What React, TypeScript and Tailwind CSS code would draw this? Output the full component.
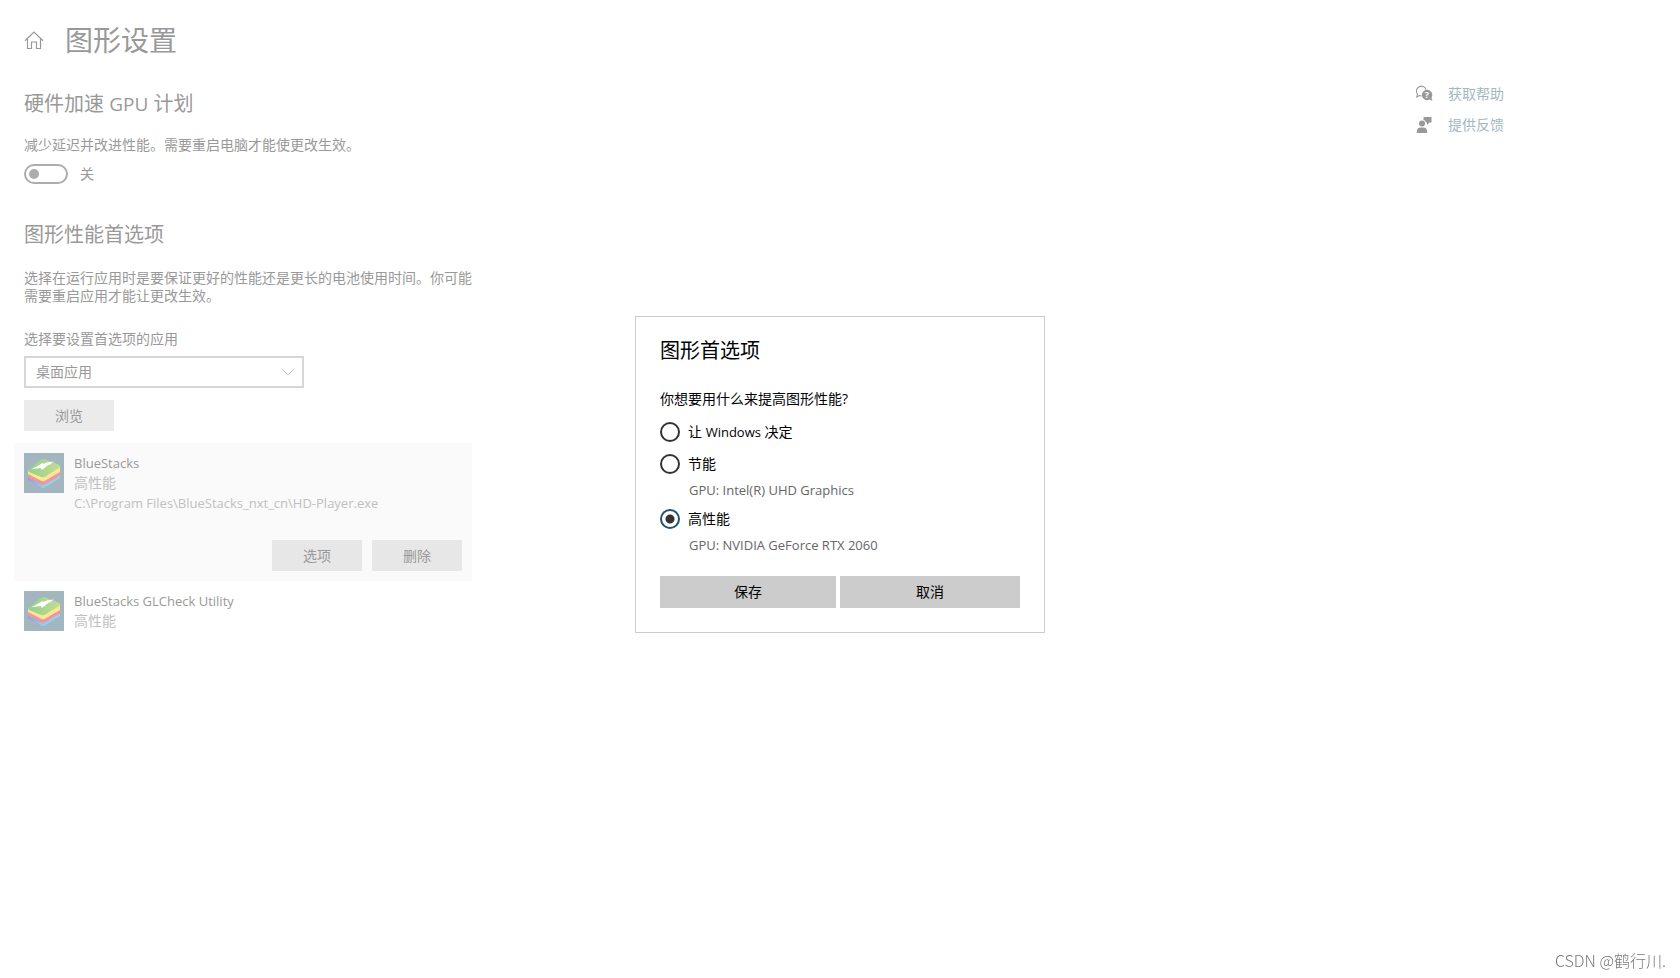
import { useState } from "react"

const PREFERENCES = [
    { id: 'auto', label: <>让 <span className="text-[13px]">Windows</span> 决定</>, gpu: null },
    { id: 'saving', label: '节能', gpu: 'GPU: Intel(R) UHD Graphics' },
    { id: 'high', label: '高性能', gpu: 'GPU: NVIDIA GeForce RTX 2060' }
];

function HomeIcon() {
    return (
        <svg width="20" height="20" viewBox="0 0 20 20" fill="none" stroke="#999999" strokeWidth="1.2">
            <path d="M1 10.700 10 2.100l9 8.600" />
            <path d="M3.500 8.700v9.800h4V12h5v6.500h4V8.700" />
        </svg>
    )
}

function HelpIcon() {
    return (
        <svg width="18" height="18" viewBox="0 0 18 18" aria-hidden="true">
            <path
                d="M5.500 10.800Q4.500 10.900 3.600 10.600L.8 12l.7-2.900A4.900 4.900 0 1 1 10 4.600"
                fill="none"
                stroke="#999999"
                strokeWidth="1.1"
            />
            <path d="M11 4.800a5.200 5.200 0 1 0 2.500 9.800l3 1.400-1-3.100A5.200 5.200 0 0 0 11 4.800Z" fill="#999999" />
            <text x="11" y="13.200" textAnchor="middle" fontSize="9" fontWeight="700" fill="#ffffff">?</text>
        </svg>
    )
}

function FeedbackIcon() {
    return (
        <svg width="18" height="18" viewBox="0 0 18 18" fill="#999999" aria-hidden="true">
            <circle cx="6" cy="7.500" r="3" />
            <path d="M.8 17v-1.200q0-4.300 4-4.300h2.400q4 0 4 4.300V17Z" />
            <path d="M7.500 1H15.500v5.500h-2L11 9V6.500h-1A4.500 4.500 0 0 0 7.500 3.800Z" />
        </svg>
    )
}

function BlueStacksLogo() {
    return (
        <svg width="40" height="40" viewBox="0 0 40 40" className="shrink-0" aria-hidden="true">
            <defs>
                <linearGradient id="bs-top" x1="0" x2="1">
                    <stop offset="0" stopColor="#93d08c" />
                    <stop offset="1" stopColor="#c3dc93" />
                </linearGradient>
                <linearGradient id="bs-base" x1="0" x2="1">
                    <stop offset="0" stopColor="#8fa6d6" />
                    <stop offset="0.5" stopColor="#97cdea" />
                    <stop offset="1" stopColor="#8fd3f0" />
                </linearGradient>
            </defs>
            <rect width="40" height="40" fill="#a3b5bf" />
            <path d="M4 24 19 18l17 4v3L21 34.500q-2 1-4 0L4 27.500Z" fill="url(#bs-base)" />
            <path d="M4 21 19 15l17 3v4.500L21 31.300q-2 1-4 0L4 24.500Z" fill="#f493a0" />
            <path d="M4 17 19 12l17 1v6L21 27.800q-2 1-4 0L4 21Z" fill="#fbe892" />
            <path d="M4.300 16.500 17 6.800q2-1.200 4-.6l13.500 5.300q2 1 1.200 3L21.500 23.500q-2.500 1.300-5 .3L5 19q-1.500-.9-.7-2.500Z" fill="url(#bs-top)" />
            <path d="M7.500 16.300 19.300 9.700l-.3 1.300q5-2.800 11.500-2.200-2.700.5-4 1.700l1.800.6q-3.600.2-5.600 1.800-2 2.600-5 4.100l-.8-2Z" fill="#ffffff" />
        </svg>
    )
}

function SettingsPage() {
    return (
        <div className="flex items-start justify-between">
            <main className="w-[472px] pl-6 pt-[22px] text-[#999999]">
                <header className="flex items-center gap-[21px]">
                    <a href="#home" aria-label="主页"><HomeIcon /></a>
                    <h1 className="text-[28px] leading-9">图形设置</h1>
                </header>

                <h2 className="mt-8 text-xl leading-7">硬件加速 <span className="text-[19px]">GPU</span> 计划</h2>
                <p className="mt-[18px]">减少延迟并改进性能。需要重启电脑才能使更改生效。</p>
                <label className="mt-[10px] flex items-center gap-3">
                    <span className="relative flex h-5 w-11">
                        <input
                            type="checkbox"
                            role="switch"
                            className="peer h-5 w-11 appearance-none rounded-full border-2 border-[#adadad]"
                        />
                        <span className="pointer-events-none absolute left-[5px] top-[5px] size-[10px] rounded-full bg-[#adadad] peer-checked:left-[29px]" />
                    </span>
                    <span>关</span>
                </label>

                <h2 className="mt-[37px] text-xl leading-7">图形性能首选项</h2>
                <p className="mt-5">选择在运行应用时是要保证更好的性能还是更长的电池使用时间。你可能需要重启应用才能让更改生效。</p>

                <label htmlFor="app-type" className="mt-[25px] block">选择要设置首选项的应用</label>
                <div className="relative mt-2 w-[280px]">
                    <select id="app-type" className="h-8 w-full appearance-none border-2 border-[#d6d6d6] bg-white px-[10px]">
                        <option>桌面应用</option>
                    </select>
                    <svg className="pointer-events-none absolute right-[10px] top-3" width="12" height="8" viewBox="0 0 12 8" fill="none" stroke="#c2c2c2">
                        <path d="m0 1 6 6 6-6" />
                    </svg>
                </div>
                <button type="button" className="mt-3 block h-[31px] w-[90px] bg-[#ebebeb]">浏览</button>

                <ul className="-ml-[10px] mt-3">
                    <li className="bg-[#fafafa] p-[10px]">
                        <div className="flex gap-[10px]">
                            <BlueStacksLogo />
                            <div>
                                <p className="text-[13px] leading-5">BlueStacks</p>
                                <p className="leading-5 text-[#c0c0c0]">高性能</p>
                                <p className="text-[13px] leading-5 text-[#c0c0c0]">C:\Program Files\BlueStacks_nxt_cn\HD-Player.exe</p>
                            </div>
                        </div>
                        <div className="mt-[27px] flex justify-end gap-[10px]">
                            <button type="button" className="h-[31px] w-[90px] bg-[#e7e7e7]">选项</button>
                            <button type="button" className="h-[31px] w-[90px] bg-[#e7e7e7]">删除</button>
                        </div>
                    </li>
                    <li className="flex gap-[10px] p-[10px]">
                        <BlueStacksLogo />
                        <div>
                            <p className="text-[13px] leading-5">BlueStacks GLCheck Utility</p>
                            <p className="leading-5 text-[#c0c0c0]">高性能</p>
                        </div>
                    </li>
                </ul>
            </main>

            <nav className="flex flex-col gap-[13px] pr-44 pt-[85px] text-[#a3b8c4]">
                <a href="#help" className="flex items-center gap-[14px]"><HelpIcon />获取帮助</a>
                <a href="#feedback" className="flex items-center gap-[14px]"><FeedbackIcon />提供反馈</a>
            </nav>
        </div>
    )
}

function PreferenceDialog() {
    const [selected, setSelected] = useState('high');

    return (
        <div className="fixed inset-0 flex items-center justify-center pb-[30px]">
            <form role="dialog" aria-labelledby="dialog-title" className="w-[410px] border border-[#cccccc] bg-white px-6 pb-6 pt-5 text-black">
                <h2 id="dialog-title" className="text-xl leading-7">图形首选项</h2>
                <fieldset className="mt-[25px]">
                    <legend>你想要用什么来提高图形性能?</legend>
                    <div className="mt-[14px] flex flex-col">
                        {PREFERENCES.map(({ id, label, gpu }) => (
                            <div key={id} className="mb-3">
                                <label className="flex items-center gap-2">
                                    <input
                                        type="radio"
                                        name="preference"
                                        checked={selected === id}
                                        onChange={() => setSelected(id)}
                                        className="size-5 appearance-none rounded-full border-2 border-[#333333] checked:border-[#1f5470] checked:bg-[radial-gradient(circle,#333333_4px,transparent_5px)]"
                                    />
                                    <span>{label}</span>
                                </label>
                                {gpu && <p className="-mb-[2px] mt-[7px] pl-[29px] text-[13px] text-[#666666]">{gpu}</p>}
                            </div>
                        ))}
                    </div>
                </fieldset>
                <div className="mt-3 flex gap-1">
                    <button type="button" className="h-8 w-44 bg-[#cccccc]">保存</button>
                    <button type="button" className="h-8 flex-1 bg-[#cccccc]">取消</button>
                </div>
            </form>
        </div>
    )
}

export default function App() {
    return (
        <div className="min-h-screen bg-white font-['Open_Sans','Noto_Sans_CJK_SC',sans-serif] text-sm leading-[18px]">
            <SettingsPage />
            <PreferenceDialog />
            <div className="fixed bottom-2 right-[14px] font-['Noto_Sans_CJK_SC',sans-serif] text-base font-light leading-5 text-[#7a7a7a]">
                CSDN @鹤行川.
            </div>
        </div>
    )
}
